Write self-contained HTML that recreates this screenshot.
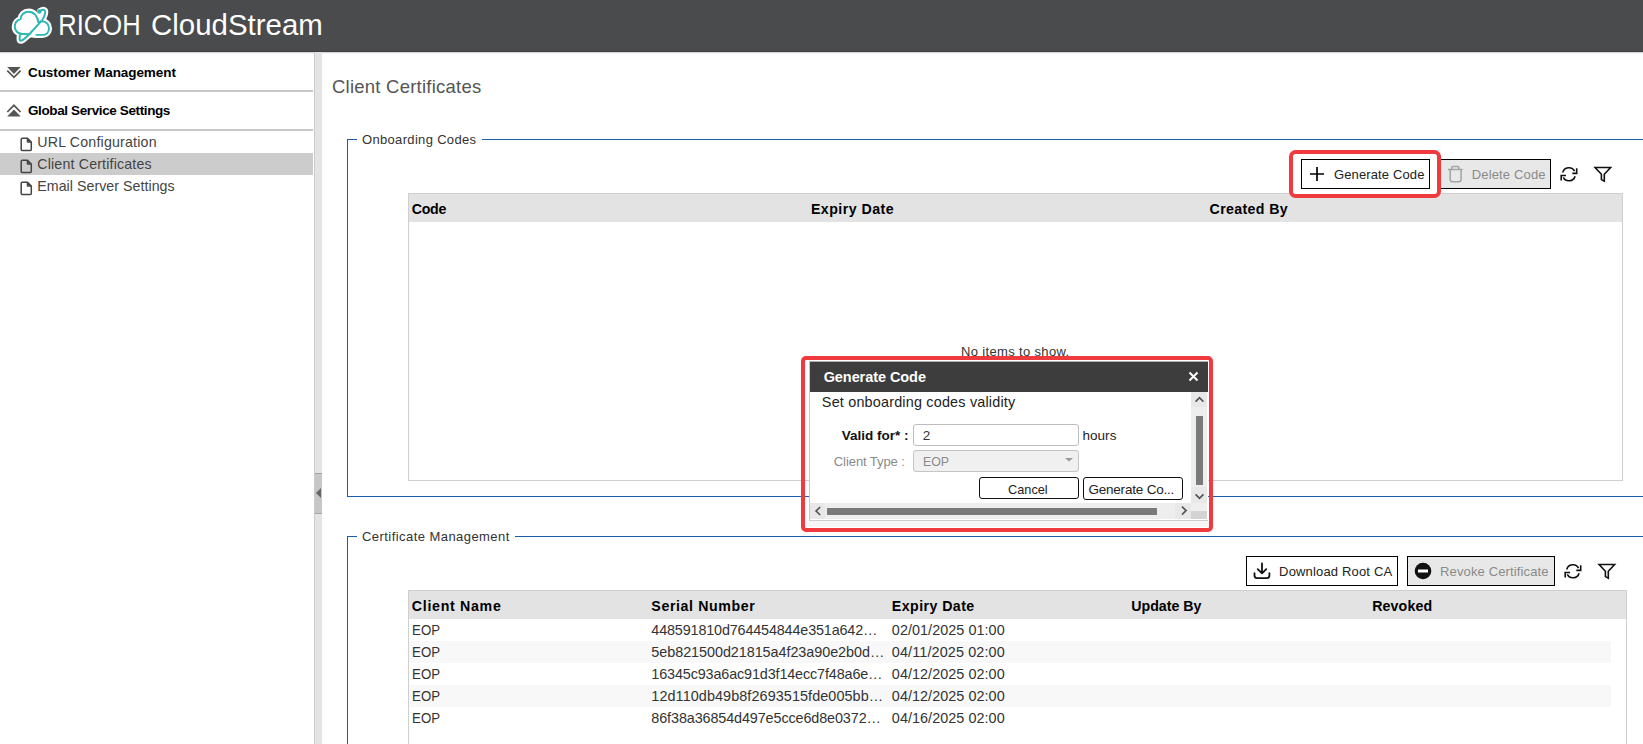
<!DOCTYPE html>
<html><head><meta charset="utf-8"><title>RICOH CloudStream</title>
<style>
html,body{margin:0;padding:0;}
body{width:1643px;height:744px;overflow:hidden;position:relative;background:#fff;font-family:"Liberation Sans",sans-serif;}
.t{position:absolute;white-space:nowrap;}
.b{position:absolute;}
</style></head><body>
<div class="b" style="left:0px;top:0px;width:1643px;height:51px;background:#4a4b4d;"></div>
<div class="b" style="left:0px;top:51px;width:1643px;height:1px;background:#3f3f41;"></div>
<div class="b" style="left:0px;top:52px;width:1643px;height:1px;background:#d8d8d8;"></div>
<div class="b" style="left:0px;top:53px;width:1643px;height:1px;background:#f4f4f4;"></div>
<svg class="b" style="left:8px;top:2px" width="48" height="48" viewBox="0 0 744 744">
<g fill="#fff" stroke="#fff" stroke-width="95" stroke-linejoin="round" stroke-linecap="round">
<path d="M440 510 L535 510 C600 510 635 465 635 410 C635 350 590 300 530 300 C505 300 485 305 470 315 C460 220 400 150 320 150 C250 150 200 200 195 265 C140 280 105 330 105 385 C105 450 160 497 230 497 L330 500 Z"/>
<path d="M190 490 C178 540 170 600 200 600 C230 595 290 540 330 500 Z" />
<path d="M330 500 L530 280 C565 230 590 150 570 130 C555 115 520 125 495 140 L470 315 Z"/>
</g>
<g fill="none" stroke="#2ab7b5" stroke-width="30" stroke-linecap="round" stroke-linejoin="round">
<path d="M440 510 L535 510 C600 510 635 465 635 410 C635 350 590 300 530 300 C505 300 485 305 470 315 C460 220 400 150 320 150 C250 150 200 200 195 265 C140 280 105 330 105 385 C105 450 160 497 230 497 L330 500"/>
<path d="M190 490 C178 540 170 600 200 600 C230 595 290 540 330 500 L530 280 C565 230 590 150 570 130 C555 115 520 125 495 140"/>
</g>
<circle cx="485" cy="148" r="34" fill="#2ab7b5"/>
</svg>
<div class="t" style="left:57.97px;top:10.05px;font-size:29.6px;line-height:29.6px;color:#fff;transform:scaleX(0.8629);transform-origin:2.37px 0;">RICOH</div>
<div class="t" style="left:150.57px;top:10.05px;font-size:29.6px;line-height:29.6px;color:#fff;transform:scaleX(0.9945);transform-origin:2.37px 0;">CloudStream</div>
<div class="b" style="left:0px;top:90px;width:313px;height:2px;background:#c8c8c8;"></div>
<div class="b" style="left:0px;top:129px;width:313px;height:2px;background:#c8c8c8;"></div>
<div class="b" style="left:0px;top:153px;width:313px;height:22px;background:#cccccc;"></div>
<svg class="b" style="left:0px;top:60px" width="40" height="65" viewBox="0 60 40 65">
<path d="M7.2 67 H20.7 L13.95 73.9 Z" fill="#555"/>
<path d="M7.3 70.6 L13.95 77.3 L20.6 70.6" fill="none" stroke="#555" stroke-width="1.7"/>
<path d="M7.3 112 L13.95 105.3 L20.6 112" fill="none" stroke="#555" stroke-width="1.7"/>
<path d="M7.2 116.4 H20.7 L13.95 109.5 Z" fill="#555"/>
</svg>
<div class="t" style="left:27.99px;top:65.65px;font-size:13.5px;line-height:13.5px;color:#000;font-weight:bold;letter-spacing:-0.076px;">Customer Management</div>
<div class="t" style="left:27.99px;top:104.35px;font-size:13.5px;line-height:13.5px;color:#000;font-weight:bold;letter-spacing:-0.382px;">Global Service Settings</div>
<svg class="b" style="left:20px;top:136.5px" width="13" height="15" viewBox="0 0 13 15">
<path d="M1.2 2.2 Q1.2 1.2 2.2 1.2 H7.5 L11.3 5 V12.6 Q11.3 13.6 10.3 13.6 H2.2 Q1.2 13.6 1.2 12.6 Z M7.5 1.2 V5 H11.3" fill="none" stroke="#444" stroke-width="1.5" stroke-linejoin="round"/>
</svg>
<div class="t" style="left:37.26px;top:135.00px;font-size:14.2px;line-height:14.2px;color:#444;letter-spacing:0.194px;">URL Configuration</div>
<svg class="b" style="left:20px;top:158.5px" width="13" height="15" viewBox="0 0 13 15">
<path d="M1.2 2.2 Q1.2 1.2 2.2 1.2 H7.5 L11.3 5 V12.6 Q11.3 13.6 10.3 13.6 H2.2 Q1.2 13.6 1.2 12.6 Z M7.5 1.2 V5 H11.3" fill="none" stroke="#444" stroke-width="1.5" stroke-linejoin="round"/>
</svg>
<div class="t" style="left:37.26px;top:157.00px;font-size:14.2px;line-height:14.2px;color:#444;letter-spacing:0.179px;">Client Certificates</div>
<svg class="b" style="left:20px;top:180.5px" width="13" height="15" viewBox="0 0 13 15">
<path d="M1.2 2.2 Q1.2 1.2 2.2 1.2 H7.5 L11.3 5 V12.6 Q11.3 13.6 10.3 13.6 H2.2 Q1.2 13.6 1.2 12.6 Z M7.5 1.2 V5 H11.3" fill="none" stroke="#444" stroke-width="1.5" stroke-linejoin="round"/>
</svg>
<div class="t" style="left:37.26px;top:179.00px;font-size:14.2px;line-height:14.2px;color:#444;letter-spacing:0.048px;">Email Server Settings</div>
<div class="b" style="left:314px;top:52px;width:1px;height:692px;background:#cbcbcb;"></div>
<div class="b" style="left:315px;top:52px;width:7px;height:692px;background:#e4e4e4;"></div>
<div class="b" style="left:315px;top:473px;width:7px;height:41px;background:#c6c6c6;border-top:1px solid #9aa8a8;border-bottom:1px solid #9aa8a8;box-sizing:border-box;"></div>
<svg class="b" style="left:315px;top:486px" width="7" height="14" viewBox="0 0 7 14"><path d="M1 7 L6 2 V12 Z" fill="#666"/></svg>
<div class="t" style="left:331.97px;top:77.80px;font-size:18.5px;line-height:18.5px;color:#555;letter-spacing:0.235px;">Client Certificates</div>
<div class="b" style="left:347px;top:139px;width:1px;height:357px;background:#1c5ca8;"></div>
<div class="b" style="left:347px;top:139px;width:10px;height:1px;background:#1c5ca8;"></div>
<div class="b" style="left:481.8px;top:139px;width:1161.2px;height:1px;background:#1c5ca8;"></div>
<div class="b" style="left:347px;top:496px;width:1296px;height:1px;background:#1c5ca8;"></div>
<div class="t" style="left:362.02px;top:132.80px;font-size:13px;line-height:13px;color:#333;letter-spacing:0.325px;">Onboarding Codes</div>
<div class="b" style="left:347px;top:536px;width:1px;height:208px;background:#1c5ca8;"></div>
<div class="b" style="left:347px;top:536px;width:10px;height:1px;background:#1c5ca8;"></div>
<div class="b" style="left:515.3px;top:536px;width:1127.7px;height:1px;background:#1c5ca8;"></div>
<div class="t" style="left:362.02px;top:529.80px;font-size:13px;line-height:13px;color:#333;letter-spacing:0.443px;">Certificate Management</div>
<div class="b" style="left:408px;top:193px;width:1215px;height:288px;border:1px solid #cfcfcf;box-sizing:border-box;background:#fff;"></div>
<div class="b" style="left:409px;top:194px;width:1213px;height:28px;background:#e3e3e3;"></div>
<div class="t" style="left:411.86px;top:201.80px;font-size:14.2px;line-height:14.2px;color:#000;font-weight:bold;letter-spacing:-0.334px;">Code</div>
<div class="t" style="left:810.96px;top:201.80px;font-size:14.2px;line-height:14.2px;color:#000;font-weight:bold;letter-spacing:0.456px;">Expiry Date</div>
<div class="t" style="left:1209.56px;top:201.80px;font-size:14.2px;line-height:14.2px;color:#000;font-weight:bold;letter-spacing:0.358px;">Created By</div>
<div class="t" style="left:960.91px;top:345.20px;font-size:13px;line-height:13px;color:#333;letter-spacing:0.350px;">No items to show.</div>
<div class="b" style="left:1439px;top:159px;width:112px;height:30px;border:1px solid #000;box-sizing:border-box;background:#e8e8e8;"></div>
<div class="b" style="left:1288.7px;top:150.2px;width:152.5px;height:48px;border:4px solid #ef3a3e;border-radius:6.5px;box-sizing:border-box;background:#fff;"></div>
<div class="b" style="left:1301px;top:159px;width:129px;height:30px;border:1px solid #000;box-sizing:border-box;background:#fff;"></div>
<svg class="b" style="left:1309px;top:166px" width="16" height="16" viewBox="0 0 16 16"><path d="M8 1 V15 M1 8 H15" stroke="#000" stroke-width="1.7"/></svg>
<div class="t" style="left:1333.91px;top:167.90px;font-size:13px;line-height:13px;color:#222;letter-spacing:0.134px;">Generate Code</div>
<svg class="b" style="left:1440px;top:158px" width="30" height="30" viewBox="0 0 30 30"><path d="M8 11.4 H22.6 M11.8 11.4 V9.5 Q11.8 8.4 12.9 8.4 H17.7 Q18.8 8.4 18.8 9.5 V11.4 M10.2 11.4 V21.5 Q10.2 23.7 12.4 23.7 H18.9 Q21.1 23.7 21.1 21.5 V11.4" fill="none" stroke="#a3a3a3" stroke-width="1.5" stroke-linejoin="round"/></svg>
<div class="t" style="left:1471.71px;top:167.90px;font-size:13px;line-height:13px;color:#8a8a8a;letter-spacing:0.153px;">Delete Code</div>
<svg class="b" style="left:1555px;top:160px" width="30" height="30" viewBox="0 0 30 30">
<path d="M7.7 12.5 A6.4 6.4 0 0 1 19.6 11.2 M21.7 8.3 V13.4 H17.3 M20.1 16.2 A6.4 6.4 0 0 1 8.3 17.4 M6.2 20.5 V15.5 H11" fill="none" stroke="#111" stroke-width="1.6"/>
</svg>
<svg class="b" style="left:1590px;top:160px" width="30" height="30" viewBox="0 0 30 30">
<path d="M5.1 7.5 H20.6 L14.3 14.3 V21.2 L11.4 19.6 V14.3 Z" fill="none" stroke="#111" stroke-width="1.6" stroke-linejoin="miter"/>
</svg>
<div class="b" style="left:1246px;top:556px;width:152px;height:30px;border:1px solid #000;box-sizing:border-box;background:#fff;"></div>
<svg class="b" style="left:1246px;top:556px" width="40" height="30" viewBox="0 0 40 30"><path d="M16 7.3 V17.3 M11.7 13.1 L16 17.4 L20.3 13.1 M8.5 17.2 V19.6 Q8.5 22.2 11.1 22.2 H20.8 Q23.4 22.2 23.4 19.6 V17.2" fill="none" stroke="#111" stroke-width="1.8" stroke-linecap="round" stroke-linejoin="round"/></svg>
<div class="t" style="left:1279.12px;top:565.00px;font-size:13px;line-height:13px;color:#222;letter-spacing:0.163px;">Download Root CA</div>
<div class="b" style="left:1407px;top:556px;width:148px;height:30px;border:1px solid #000;box-sizing:border-box;background:#e8e8e8;"></div>
<svg class="b" style="left:1414px;top:562px" width="18" height="18" viewBox="0 0 18 18"><circle cx="9" cy="9" r="8.3" fill="#111"/><rect x="4" y="7.5" width="10" height="3" fill="#fff"/></svg>
<div class="t" style="left:1440.01px;top:565.00px;font-size:13px;line-height:13px;color:#8a8a8a;letter-spacing:0.135px;">Revoke Certificate</div>
<svg class="b" style="left:1559px;top:557px" width="30" height="30" viewBox="0 0 30 30">
<path d="M7.7 12.5 A6.4 6.4 0 0 1 19.6 11.2 M21.7 8.3 V13.4 H17.3 M20.1 16.2 A6.4 6.4 0 0 1 8.3 17.4 M6.2 20.5 V15.5 H11" fill="none" stroke="#111" stroke-width="1.6"/>
</svg>
<svg class="b" style="left:1594px;top:557px" width="30" height="30" viewBox="0 0 30 30">
<path d="M5.1 7.5 H20.6 L14.3 14.3 V21.2 L11.4 19.6 V14.3 Z" fill="none" stroke="#111" stroke-width="1.6" stroke-linejoin="miter"/>
</svg>
<div class="b" style="left:408px;top:590px;width:1219px;height:160px;border:1px solid #cfcfcf;box-sizing:border-box;background:#fff;"></div>
<div class="b" style="left:409px;top:591px;width:1217px;height:28px;background:#e3e3e3;"></div>
<div class="t" style="left:411.86px;top:599.00px;font-size:14.2px;line-height:14.2px;color:#000;font-weight:bold;letter-spacing:0.693px;">Client Name</div>
<div class="t" style="left:651.36px;top:599.00px;font-size:14.2px;line-height:14.2px;color:#000;font-weight:bold;letter-spacing:0.610px;">Serial Number</div>
<div class="t" style="left:891.86px;top:599.00px;font-size:14.2px;line-height:14.2px;color:#000;font-weight:bold;letter-spacing:0.426px;">Expiry Date</div>
<div class="t" style="left:1131.36px;top:599.00px;font-size:14.2px;line-height:14.2px;color:#000;font-weight:bold;letter-spacing:-0.028px;">Update By</div>
<div class="t" style="left:1372.16px;top:599.00px;font-size:14.2px;line-height:14.2px;color:#000;font-weight:bold;letter-spacing:0.134px;">Revoked</div>
<div class="t" style="left:411.85px;top:623.00px;font-size:14.4px;line-height:14.4px;color:#333;transform:scaleX(0.9207);transform-origin:1.15px 0;">EOP</div>
<div class="t" style="left:651.35px;top:623.00px;font-size:14.4px;line-height:14.4px;color:#333;letter-spacing:-0.164px;">448591810d764454844e351a642…</div>
<div class="t" style="left:891.85px;top:623.00px;font-size:14.4px;line-height:14.4px;color:#333;letter-spacing:0.053px;">02/01/2025 01:00</div>
<div class="b" style="left:409px;top:641px;width:1202px;height:22px;background:#f8f8f8;"></div>
<div class="t" style="left:411.85px;top:645.00px;font-size:14.4px;line-height:14.4px;color:#333;transform:scaleX(0.9207);transform-origin:1.15px 0;">EOP</div>
<div class="t" style="left:651.35px;top:645.00px;font-size:14.4px;line-height:14.4px;color:#333;letter-spacing:-0.055px;">5eb821500d21815a4f23a90e2b0d…</div>
<div class="t" style="left:891.85px;top:645.00px;font-size:14.4px;line-height:14.4px;color:#333;letter-spacing:0.124px;">04/11/2025 02:00</div>
<div class="t" style="left:411.85px;top:667.00px;font-size:14.4px;line-height:14.4px;color:#333;transform:scaleX(0.9207);transform-origin:1.15px 0;">EOP</div>
<div class="t" style="left:651.35px;top:667.00px;font-size:14.4px;line-height:14.4px;color:#333;letter-spacing:-0.141px;">16345c93a6ac91d3f14ecc7f48a6e…</div>
<div class="t" style="left:891.85px;top:667.00px;font-size:14.4px;line-height:14.4px;color:#333;letter-spacing:0.053px;">04/12/2025 02:00</div>
<div class="b" style="left:409px;top:685px;width:1202px;height:22px;background:#f8f8f8;"></div>
<div class="t" style="left:411.85px;top:689.00px;font-size:14.4px;line-height:14.4px;color:#333;transform:scaleX(0.9207);transform-origin:1.15px 0;">EOP</div>
<div class="t" style="left:651.35px;top:689.00px;font-size:14.4px;line-height:14.4px;color:#333;letter-spacing:0.087px;">12d110db49b8f2693515fde005bb…</div>
<div class="t" style="left:891.85px;top:689.00px;font-size:14.4px;line-height:14.4px;color:#333;letter-spacing:0.053px;">04/12/2025 02:00</div>
<div class="t" style="left:411.85px;top:711.00px;font-size:14.4px;line-height:14.4px;color:#333;transform:scaleX(0.9207);transform-origin:1.15px 0;">EOP</div>
<div class="t" style="left:651.35px;top:711.00px;font-size:14.4px;line-height:14.4px;color:#333;letter-spacing:-0.118px;">86f38a36854d497e5cce6d8e0372…</div>
<div class="t" style="left:891.85px;top:711.00px;font-size:14.4px;line-height:14.4px;color:#333;letter-spacing:0.053px;">04/16/2025 02:00</div>
<div class="b" style="left:809px;top:361px;width:399px;height:160px;border-left:1px solid #c8c8c8;border-top:1px solid #b0b0b0;box-sizing:border-box;background:#fff;"></div>
<div class="b" style="left:810px;top:362px;width:398px;height:30px;background:#3d3d3d;"></div>
<div class="t" style="left:823.65px;top:369.55px;font-size:14.5px;line-height:14.5px;color:#fff;font-weight:bold;letter-spacing:-0.070px;">Generate Code</div>
<svg class="b" style="left:1188px;top:371px" width="11" height="11" viewBox="0 0 11 11"><path d="M1.5 1.5 L9.5 9.5 M9.5 1.5 L1.5 9.5" stroke="#fff" stroke-width="2"/></svg>
<div class="t" style="left:821.85px;top:394.90px;font-size:14.4px;line-height:14.4px;color:#222;letter-spacing:0.192px;">Set onboarding codes validity</div>
<div class="t" style="left:841.79px;top:428.65px;font-size:13.5px;line-height:13.5px;color:#111;font-weight:bold;letter-spacing:-0.015px;">Valid for* :</div>
<div class="b" style="left:913px;top:424px;width:166px;height:22px;border:1px solid #bdbdbd;border-radius:3px;box-sizing:border-box;background:#fff;"></div>
<div class="t" style="left:922.69px;top:428.65px;font-size:13.5px;line-height:13.5px;color:#333;">2</div>
<div class="t" style="left:1082.39px;top:428.65px;font-size:13.5px;line-height:13.5px;color:#222;letter-spacing:0.058px;">hours</div>
<div class="t" style="left:833.81px;top:455.00px;font-size:13px;line-height:13px;color:#8a8a8a;letter-spacing:-0.077px;">Client Type :</div>
<div class="b" style="left:913px;top:450px;width:166px;height:22px;border:1px solid #c4c4c4;border-radius:3px;box-sizing:border-box;background:#f0f0f0;"></div>
<div class="t" style="left:922.71px;top:455.00px;font-size:13px;line-height:13px;color:#8a8a8a;transform:scaleX(0.9470);transform-origin:1.04px 0;">EOP</div>
<svg class="b" style="left:1064px;top:457px" width="10" height="6" viewBox="0 0 10 6"><path d="M1 1 H9 L5 4.5 Z" fill="#999"/></svg>
<div class="b" style="left:979px;top:477px;width:100px;height:22px;border:1px solid #111;border-radius:3px;box-sizing:border-box;background:#fff;"></div>
<div class="t" style="left:1008.39px;top:482.75px;font-size:13.5px;line-height:13.5px;color:#222;transform:scaleX(0.9424);transform-origin:1.08px 0;">Cancel</div>
<div class="b" style="left:1083px;top:477px;width:100px;height:23px;border:1px solid #111;border-radius:3px;box-sizing:border-box;background:#fff;"></div>
<div class="t" style="left:1088.39px;top:482.75px;font-size:13.5px;line-height:13.5px;color:#222;letter-spacing:-0.196px;">Generate Co...</div>
<div class="b" style="left:1191px;top:392px;width:16px;height:111px;background:#eeeeee;"></div>
<div class="b" style="left:1191px;top:392px;width:16px;height:15px;background:#e8e8e8;"></div>
<div class="b" style="left:1191px;top:487px;width:16px;height:16px;background:#e8e8e8;"></div>
<div class="b" style="left:1196px;top:416px;width:7px;height:69px;background:#7a7a7a;"></div>
<svg class="b" style="left:1180px;top:388px" width="35" height="35" viewBox="0 0 35 35"><path d="M15.6 13.6 L19.5 9.6 L23.4 13.6" fill="none" stroke="#555" stroke-width="1.7"/></svg>
<svg class="b" style="left:1180px;top:478px" width="35" height="35" viewBox="0 0 35 35"><path d="M15.6 16.3 L19.5 20.3 L23.4 16.3" fill="none" stroke="#555" stroke-width="1.7"/></svg>
<div class="b" style="left:810px;top:503px;width:381px;height:16px;background:#eeeeee;"></div>
<div class="b" style="left:810px;top:503px;width:15px;height:16px;background:#e8e8e8;"></div>
<div class="b" style="left:1175px;top:503px;width:16px;height:16px;background:#e8e8e8;"></div>
<div class="b" style="left:827px;top:508px;width:330px;height:7px;background:#7a7a7a;"></div>
<svg class="b" style="left:800px;top:500px" width="35" height="20" viewBox="0 0 35 20"><path d="M20.2 7 L16.1 11 L20.2 15" fill="none" stroke="#555" stroke-width="1.7"/></svg>
<svg class="b" style="left:1170px;top:500px" width="25" height="20" viewBox="0 0 25 20"><path d="M12 6.6 L16.1 10.6 L12 14.6" fill="none" stroke="#555" stroke-width="1.7"/></svg>
<div class="b" style="left:1191px;top:503px;width:16px;height:8px;background:#eeeeee;"></div>
<div class="b" style="left:1191px;top:511px;width:16px;height:8px;background:#d3d3d3;"></div>
<div class="b" style="left:809px;top:520px;width:399px;height:1px;background:#cdcdcd;"></div>
<div class="b" style="left:806px;top:521px;width:403px;height:6px;background:#f6f6f6;"></div>
<div class="b" style="left:801.3px;top:356px;width:411.5px;height:175.6px;border:4.5px solid #ef3a3e;border-radius:5px;box-sizing:border-box;"></div>

</body></html>
